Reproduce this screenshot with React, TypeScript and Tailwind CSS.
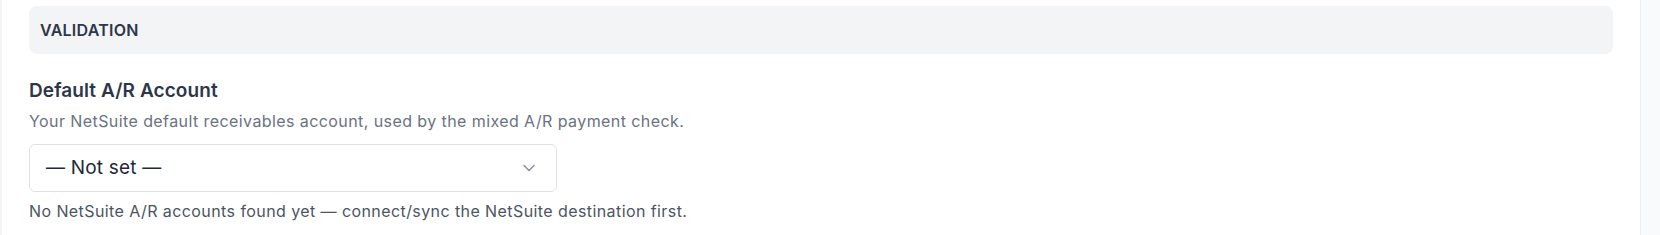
import React from "react";

export default function App() {
  return (
    <div className="flex h-[235px] w-full bg-[#f9fafb]" style={{ fontFamily: "Inter, 'Noto Sans', sans-serif" }}>
      <div className="w-[2px] bg-[#f3f4f6]" />
      <div className="flex-1 bg-white border-r border-[#eceef1] px-[27px] pt-[6px]">
        <div className="h-[48px] rounded-lg bg-[#f3f4f6] px-[11px] flex items-center">
          <span className="text-[16px] font-semibold text-[#2d3748] tracking-[0.015em]">VALIDATION</span>
        </div>
        <div className="mt-[22px]">
          <h3 className="text-[19px] leading-[30px] font-semibold text-[#2d3748] tracking-[0.005em]">Default A/R Account</h3>
          <p className="mt-[3px] text-[16px] leading-[24px] text-[#6b7280] tracking-[0.026em]">
            Your NetSuite default receivables account, used by the mixed A/R payment check.
          </p>
          <div className="mt-[11px] w-[528px] h-[48px] rounded-md border border-[#dfe2e7] bg-white flex items-center justify-between pl-[16px] pr-[17px]">
            <span className="text-[19px] text-[#1f2937] tracking-[0.01em]">— Not set —</span>
            <svg width="20" height="20" viewBox="0 0 24 24" fill="none" stroke="#8b919c" strokeWidth="1.8" strokeLinecap="round" strokeLinejoin="round">
              <path d="M6 9l6 6 6-6" />
            </svg>
          </div>
          <p className="mt-[7px] text-[16px] leading-[24px] text-[#4b5563] tracking-[0.026em]">
            No NetSuite A/R accounts found yet — connect/sync the NetSuite destination first.
          </p>
        </div>
      </div>
      <div className="w-[19px]" />
    </div>
  );
}
